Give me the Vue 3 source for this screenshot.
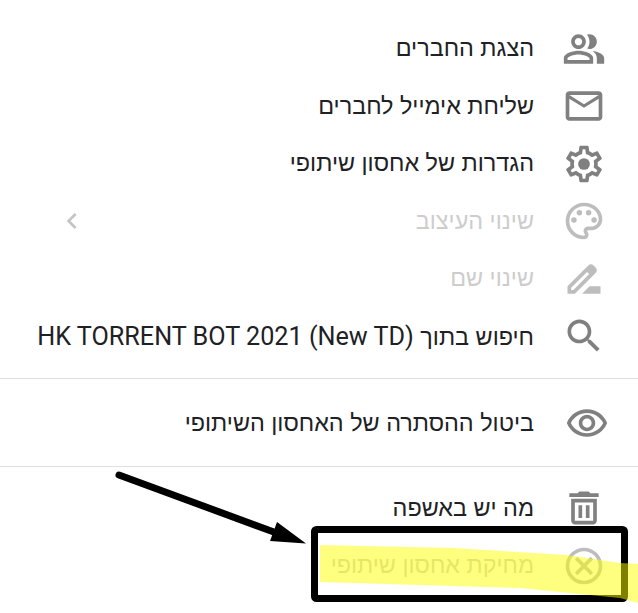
<template>
  <div class="page" dir="rtl">
    <div v-for="(group, g) in groups" :key="g" class="group">
      <div
        v-for="item in group"
        :key="item.label"
        class="row"
        :class="{ disabled: item.disabled }"
      >
        <svg class="icon" :class="{ shifted: item.shifted }" viewBox="0 0 24 24">
          <path :d="item.path" fill-rule="evenodd" />
          <circle v-for="(c, i) in item.dots" :key="i" :cx="c[0]" :cy="c[1]" :r="c[2]" />
        </svg>
        <span class="label">{{ item.label }}<bdi v-if="item.latin" class="latin">{{ item.latin }}</bdi></span>
        <svg v-if="item.submenu" class="chevron" viewBox="0 0 24 24">
          <path d="M15.41 7.41L14 6l-6 6 6 6 1.41-1.41L10.83 12z" />
        </svg>
      </div>
    </div>

    <!-- annotations drawn over the screenshot -->
    <svg class="marks" width="638" height="613" viewBox="0 0 638 613">
      <rect x="314.5" y="529.5" width="310" height="69" rx="2" fill="none" stroke="#000" stroke-width="7" />
      <path d="M320 545 L453 548 L567 555 L620 563 L638 564 L638 603 L620 598 L520 588 L320 582 Z" fill="#ffff00" fill-opacity="0.5" />
      <path d="M119 475 L282 535" stroke="#000" stroke-width="7" stroke-linecap="round" />
      <path d="M277 522 L306 543.5 L270 541 Z" fill="#000" />
    </svg>
  </div>
</template>

<script setup>
const icons = {
  people: 'M16.67 13.13C18.04 14.06 19 15.32 19 17v3h4v-3c0-2.18-3.57-3.47-6.33-3.87zM15 12c2.21 0 4-1.79 4-4s-1.79-4-4-4c-.47 0-.91.1-1.33.24C14.5 5.27 15 6.58 15 8s-.5 2.73-1.33 3.76c.42.14.86.24 1.33.24zM9 12c2.21 0 4-1.79 4-4s-1.79-4-4-4-4 1.79-4 4 1.79 4 4 4zm0-6c1.1 0 2 .9 2 2s-.9 2-2 2-2-.9-2-2 .9-2 2-2zM9 13c-2.67 0-8 1.34-8 4v3h16v-3c0-2.66-5.33-4-8-4zm6 5H3v-.99C3.2 16.29 6.3 15 9 15s5.8 1.29 6 2z',
  mail: 'M20 4H4c-1.1 0-1.99.9-1.99 2L2 18c0 1.1.9 2 2 2h16c1.1 0 2-.9 2-2V6c0-1.1-.9-2-2-2zm0 14H4V8l8 5 8-5v10zm-8-7L4 6h16l-8 5z',
  gear: 'M19.43 12.98c.04-.32.07-.64.07-.98 0-.34-.03-.66-.07-.98l2.11-1.65c.19-.15.24-.42.12-.64l-2-3.46c-.09-.16-.26-.25-.44-.25-.06 0-.12.01-.17.03l-2.49 1c-.52-.4-1.08-.73-1.69-.98l-.38-2.65C14.46 2.18 14.25 2 14 2h-4c-.25 0-.46.18-.49.42l-.38 2.65c-.61.25-1.17.59-1.69.98l-2.49-1c-.06-.02-.12-.03-.18-.03-.17 0-.34.09-.43.25l-2 3.46c-.13.22-.07.49.12.64l2.11 1.65c-.04.32-.07.65-.07.98 0 .33.03.66.07.98l-2.11 1.65c-.19.15-.24.42-.12.64l2 3.46c.09.16.26.25.44.25.06 0 .12-.01.17-.03l2.49-1c.52.4 1.08.73 1.69.98l.38 2.65c.03.24.24.42.49.42h4c.25 0 .46-.18.49-.42l.38-2.65c.61-.25 1.17-.59 1.69-.98l2.49 1c.06.02.12.03.18.03.17 0 .34-.09.43-.25l2-3.46c.12-.22.07-.49-.12-.64l-2.11-1.65zm-1.98-1.71c.04.31.05.52.05.73 0 .21-.02.43-.05.73l-.14 1.13.89.7 1.08.84-.7 1.21-1.27-.51-1.04-.42-.9.68c-.43.32-.84.56-1.25.73l-1.06.43-.16 1.13-.2 1.35h-1.4l-.19-1.35-.16-1.13-1.06-.43c-.43-.18-.83-.41-1.23-.71l-.91-.7-1.06.43-1.27.51-.7-1.21 1.08-.84.89-.7-.14-1.13c-.03-.31-.05-.54-.05-.74s.02-.43.05-.73l.14-1.13-.89-.7-1.08-.84.7-1.21 1.27.51 1.04.42.9-.68c.43-.32.84-.56 1.25-.73l1.06-.43.16-1.13.2-1.35h1.39l.19 1.35.16 1.13 1.06.43c.43.18.83.41 1.23.71l.91.7 1.06-.43 1.27-.51.7 1.21-1.07.85-.89.7.14 1.13z',
  palette: 'M12 22C6.49 22 2 17.51 2 12S6.49 2 12 2s10 4.04 10 9c0 3.31-2.69 6-6 6h-1.77c-.28 0-.5.22-.5.5 0 .12.05.23.13.33.41.47.64 1.06.64 1.67A2.5 2.5 0 0 1 12 22zm0-18c-4.41 0-8 3.59-8 8s3.59 8 8 8c.28 0 .5-.22.5-.5a.54.54 0 0 0-.14-.35c-.41-.46-.63-1.05-.63-1.65a2.5 2.5 0 0 1 2.5-2.5H16c2.21 0 4-1.79 4-4 0-3.86-3.59-7-8-7z',
  rename: 'M18.41 5.8L17.2 4.59c-.78-.78-2.05-.78-2.83 0l-2.68 2.68L3 15.96V20h4.04l8.74-8.74 2.63-2.63c.79-.78.79-2.05 0-2.83zM6.21 18H5v-1.21l8.66-8.66 1.21 1.21L6.21 18zM11 20l4-4h6v4H11z',
  search: 'M15.5 14h-.79l-.28-.27C15.41 12.59 16 11.11 16 9.5 16 5.91 13.09 3 9.5 3S3 5.91 3 9.5 5.91 16 9.5 16c1.61 0 3.09-.59 4.23-1.57l.27.28v.79l5 4.99L20.49 19l-4.99-5zm-6 0C7.01 14 5 11.99 5 9.5S7.01 5 9.5 5 14 7.01 14 9.5 11.99 14 9.5 14z',
  eye: 'M12 6c3.79 0 7.17 2.13 8.82 5.5C19.17 14.87 15.79 17 12 17s-7.17-2.13-8.82-5.5C4.83 8.13 8.21 6 12 6m0-2C7 4 2.73 7.11 1 11.5 2.73 15.89 7 19 12 19s9.27-3.11 11-7.5C21.27 7.11 17 4 12 4zm0 5c1.38 0 2.5 1.12 2.5 2.5S13.38 14 12 14s-2.5-1.12-2.5-2.5S10.62 9 12 9m0-2c-2.48 0-4.5 2.02-4.5 4.5S9.52 16 12 16s4.5-2.02 4.5-4.5S14.48 7 12 7z',
  trash: 'M9.5 3h5l1 1H20v2H4V4h4.5zM5 7h14v12c0 1.1-.9 2-2 2H7c-1.1 0-2-.9-2-2zm2 2v10h10V9zM9 10.5h2v7H9zM13 10.5h2v7h-2z',
  cancel: 'M12 2C6.47 2 2 6.47 2 12s4.47 10 10 10 10-4.47 10-10S17.53 2 12 2zm0 18c-4.41 0-8-3.59-8-8s3.59-8 8-8 8 3.59 8 8-3.59 8-8 8zm3.59-13L12 10.59 8.41 7 7 8.41 10.59 12 7 15.59 8.41 17 12 13.41 15.59 17 17 15.59 13.41 12 17 8.41z'
}

const groups = [
  [
    { label: 'הצגת החברים', path: icons.people },
    { label: 'שליחת אימייל לחברים', path: icons.mail },
    { label: 'הגדרות של אחסון שיתופי', path: icons.gear, dots: [[12, 12, 3.2]] },
    {
      label: 'שינוי העיצוב',
      path: icons.palette,
      dots: [[6.5, 11.5, 1.5], [9.5, 7.5, 1.5], [14.5, 7.5, 1.5], [17.5, 11.5, 1.5]],
      disabled: true,
      submenu: true
    },
    { label: 'שינוי שם', path: icons.rename, disabled: true },
    { label: 'חיפוש בתוך ', latin: 'HK TORRENT BOT 2021 (New TD)', path: icons.search }
  ],
  [{ label: 'ביטול ההסתרה של האחסון השיתופי', path: icons.eye, shifted: true }],
  [
    { label: 'מה יש באשפה', path: icons.trash },
    { label: 'מחיקת אחסון שיתופי', path: icons.cancel, disabled: true }
  ]
]
</script>

<style scoped>
.page {
  position: relative;
  width: 638px;
  height: 613px;
  overflow: hidden;
  background: #fff;
  padding-top: 20px;
  box-sizing: border-box;
  font-family: 'Liberation Sans', Roboto, sans-serif;
}

.group {
  padding: 0 0 13px;
  margin-bottom: 13px;
  border-bottom: 1px solid #e0e0e0;
}

.group:first-child {
  margin-bottom: 16px;
}

.group:last-of-type {
  border-bottom: 0;
}

.row {
  display: flex;
  align-items: center;
  height: 57.5px;
  padding-right: 32px;
  padding-left: 56px;
  color: #202124;
  font-size: 23.4px;
}

.row.disabled {
  color: #cdcdcd;
}

.icon {
  flex: none;
  width: 44px;
  height: 44px;
  margin-left: 28px;
  fill: #808080;
}

.icon.shifted {
  margin-right: -3px;
  margin-left: 31px;
}

.disabled .icon {
  fill: #bdbdbd;
}

.label {
  white-space: pre;
}

.latin {
  font-family: Roboto, sans-serif;
  font-size: 25.2px;
}

.chevron {
  flex: none;
  width: 32px;
  height: 32px;
  margin-right: auto;
  fill: #c4c4c4;
}

.marks {
  position: absolute;
  left: 0;
  top: 0;
}
</style>
